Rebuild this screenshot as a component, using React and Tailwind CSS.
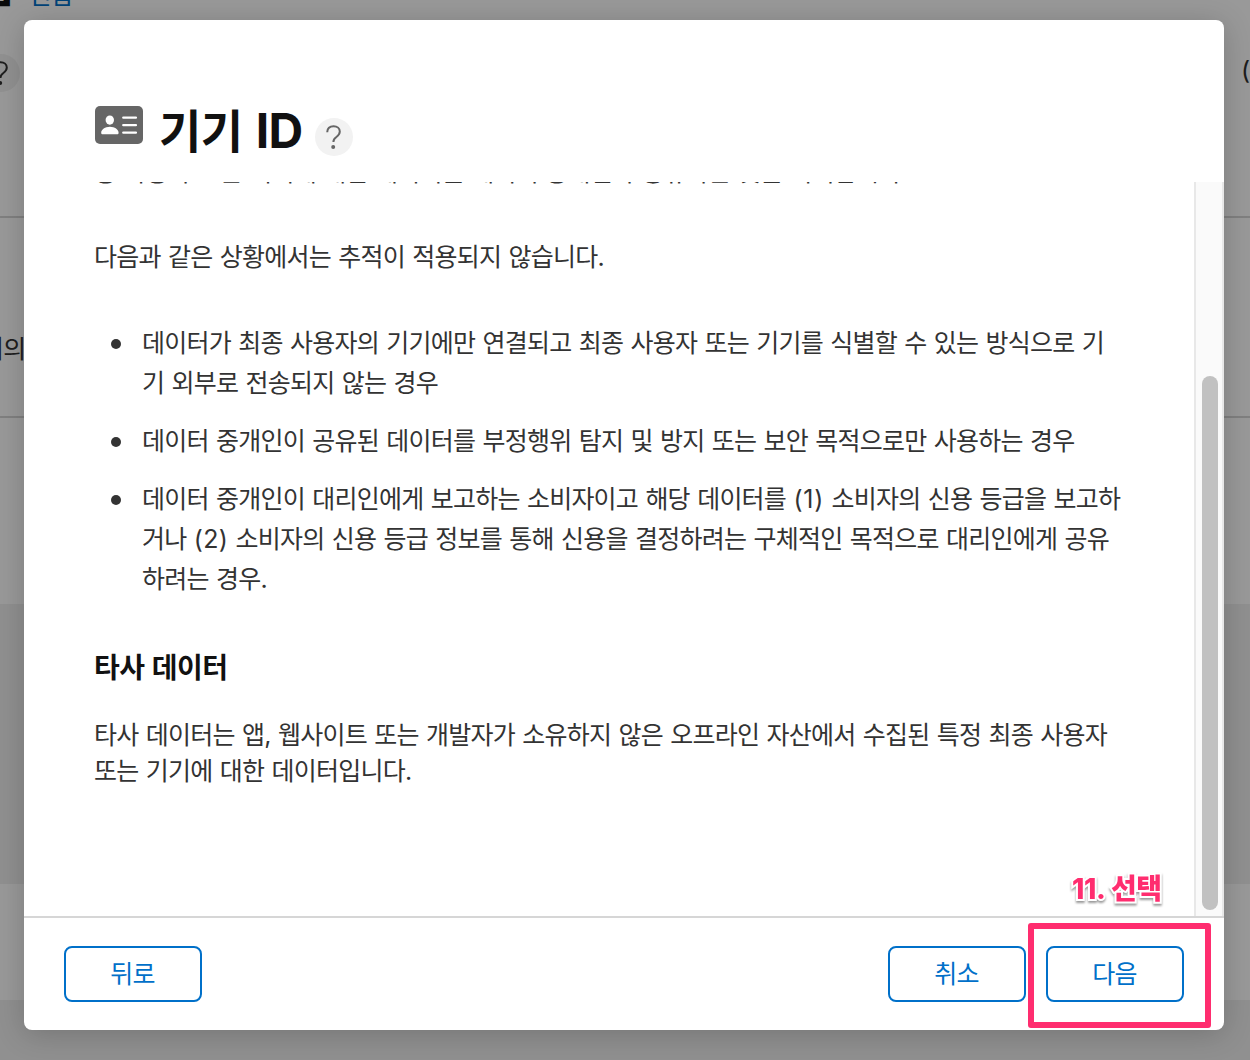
const bullets = [
  [
    '데이터가 최종 사용자의 기기에만 연결되고 최종 사용자 또는 기기를 식별할 수 있는 방식으로 기',
    '기 외부로 전송되지 않는 경우',
  ],
  ['데이터 중개인이 공유된 데이터를 부정행위 탐지 및 방지 또는 보안 목적으로만 사용하는 경우'],
  [
    <>데이터 중개인이 대리인에게 보고하는 소비자이고 해당 데이터를 <span className="tracking-[0.8px]">(1)</span> 소비자의 신용 등급을 보고하</>,
    <>거나 <span className="tracking-[0.3px]">(2)</span> 소비자의 신용 등급 정보를 통해 신용을 결정하려는 구체적인 목적으로 대리인에게 공유</>,
    '하려는 경우.',
  ],
]

function HelpMark({ className = '' }) {
  return (
    <span className={`flex items-center justify-center rounded-full bg-[#f2f2f2] ${className}`}>
      <svg viewBox="0 0 38 38" className="w-full h-full" fill="none">
        <path d="M12.2 14.2C12.4 10.4 14.8 8.3 18.6 8.3c3.7 0 6.2 2.1 6.2 5.3 0 2.4-1.2 3.9-3.4 5.4-2.2 1.5-3 2.5-3 4.9" stroke="currentColor" strokeWidth="2" />
        <circle cx="18.2" cy="29" r="2" fill="currentColor" />
      </svg>
    </span>
  )
}

function IdCardIcon() {
  return (
    <svg viewBox="0 0 48 38" className="w-12 h-[38px] shrink-0">
      <rect width="48" height="38" rx="5" fill="#666" />
      <ellipse cx="14.8" cy="14.1" rx="4.2" ry="4.6" fill="#fff" />
      <path d="M6.2 26.8c0-3.2 3.9-6 8.7-6s8.7 2.8 8.7 6c0 1-.6 1.5-1.6 1.5H7.8c-1 0-1.6-.5-1.6-1.5z" fill="#fff" />
      <path d="M28.3 11.6h12.6M28.3 19.1h12.6M28.3 26.6h12.6" stroke="#fff" strokeWidth="2.4" strokeLinecap="round" />
    </svg>
  )
}

function Button({ children }) {
  return (
    <button className="w-[138px] h-14 rounded-lg border-2 border-[#0070c9] bg-white text-[#0070c9] pt-px pr-px cursor-pointer">
      {children}
    </button>
  )
}

function PageBehind() {
  return (
    <div className="h-full bg-white text-[#333]">
      <div className="h-[216px] overflow-hidden">
        <div className="flex items-end h-2 -ml-[29px] whitespace-nowrap">
          <span className="text-[48px] leading-[46px] font-bold text-[#111]">집</span>
          <span className="ml-[14px] leading-[26px] tracking-[-1.5px] text-[#0070c9]">편집</span>
        </div>
        <div className="flex items-center justify-between mt-[46px]">
          <HelpMark className="w-[38px] h-[38px] -ml-[18px]" />
          <span className="w-[9px] -mt-1 overflow-hidden whitespace-nowrap">(</span>
        </div>
      </div>
      <div className="h-[202px] border-y-2 border-[#d6d6d6] overflow-hidden">
        <p className="mt-[111px] -ml-[19px] leading-10">기의</p>
      </div>
      <div className="h-[186px]" />
      <div className="h-[280px] bg-[#f0f0f0]" />
      <div className="h-[116px]" />
      <div className="h-[60px] bg-[#f0f0f0]" />
    </div>
  )
}

export default function App() {
  return (
    <div className="relative w-[1250px] h-[1060px] overflow-hidden text-[25px] tracking-[-0.77px] [word-spacing:1.05px] font-['Inter','Noto_Sans_CJK_KR',sans-serif]">
      <PageBehind />
      <div className="absolute inset-0 bg-black/40 px-6 pt-5">
        <div className="relative flex flex-col w-[1200px] h-[1010px] rounded-lg bg-white shadow-[0_4px_30px_rgba(0,0,0,0.2)]">
          <header className="flex h-[162px] pt-[86px] pl-[71px] shrink-0">
            <IdCardIcon />
            <h1 className="w-[145px] ml-[16px] text-[46px] leading-[50px] tracking-[-0.6px] [word-spacing:3px] whitespace-nowrap font-bold text-[#111]">
              기기 <span className="text-[48px]">ID</span>
            </h1>
            <HelpMark className="w-[38px] h-[38px] mt-3 ml-[11px] text-[#666]" />
          </header>

          <div className="flex flex-1 min-h-0">
            <div className="flex-1 overflow-hidden pl-[70px] text-[#333] whitespace-nowrap">
              <p className="-mt-7 leading-9">종 사용자 또는 기기에 대한 데이터를 데이터 중개인과 공유하는 것을 의미합니다.</p>
              <p className="mt-[49px] leading-9">다음과 같은 상황에서는 추적이 적용되지 않습니다.</p>
              <ul className="flex flex-col gap-[18px] mt-12 leading-10">
                {bullets.map((lines, i) => (
                  <li key={i} className="flex">
                    <span className="w-[10px] h-[10px] mt-[16px] ml-[17px] mr-[21px] rounded-full bg-[#333]" />
                    <div>
                      {lines.map((line, j) => <p key={j}>{line}</p>)}
                    </div>
                  </li>
                ))}
              </ul>
              <h2 className="mt-[49px] text-[28px] leading-10 tracking-[-0.5px] font-bold text-[#111]">타사 데이터</h2>
              <p className="mt-[29px] leading-9">
                타사 데이터는 앱, 웹사이트 또는 개발자가 소유하지 않은 오프라인 자산에서 수집된 특정 최종 사용자
                <br />
                또는 기기에 대한 데이터입니다.
              </p>
            </div>
            <div className="w-[30px] pt-[194px] pl-[6px] border-x-2 border-[#e8e8e8] bg-[#fafafa]">
              <div className="w-4 h-[534px] rounded-full bg-[#c1c1c1]" />
            </div>
          </div>

          <footer className="flex items-center h-[114px] px-10 border-t-2 border-[#d6d6d6] shrink-0">
            <Button>뒤로</Button>
            <div className="flex gap-5 ml-auto">
              <Button>취소</Button>
              <Button>다음</Button>
            </div>
          </footer>

          <div className="absolute left-[1004px] top-[903px] w-[183px] h-[105px] rounded-[3px] border-[6px] border-[#ff2d6f]" />
          <p className="absolute left-[1048px] top-[849px] text-[28px] leading-10 tracking-[-0.4px] [word-spacing:1px] font-extrabold text-[#ff2d6f] whitespace-nowrap [-webkit-text-stroke:4px_white] [paint-order:stroke_fill] drop-shadow-[0_2px_1px_rgba(0,0,0,0.4)]">
            11. 선택
          </p>
        </div>
      </div>
    </div>
  )
}
